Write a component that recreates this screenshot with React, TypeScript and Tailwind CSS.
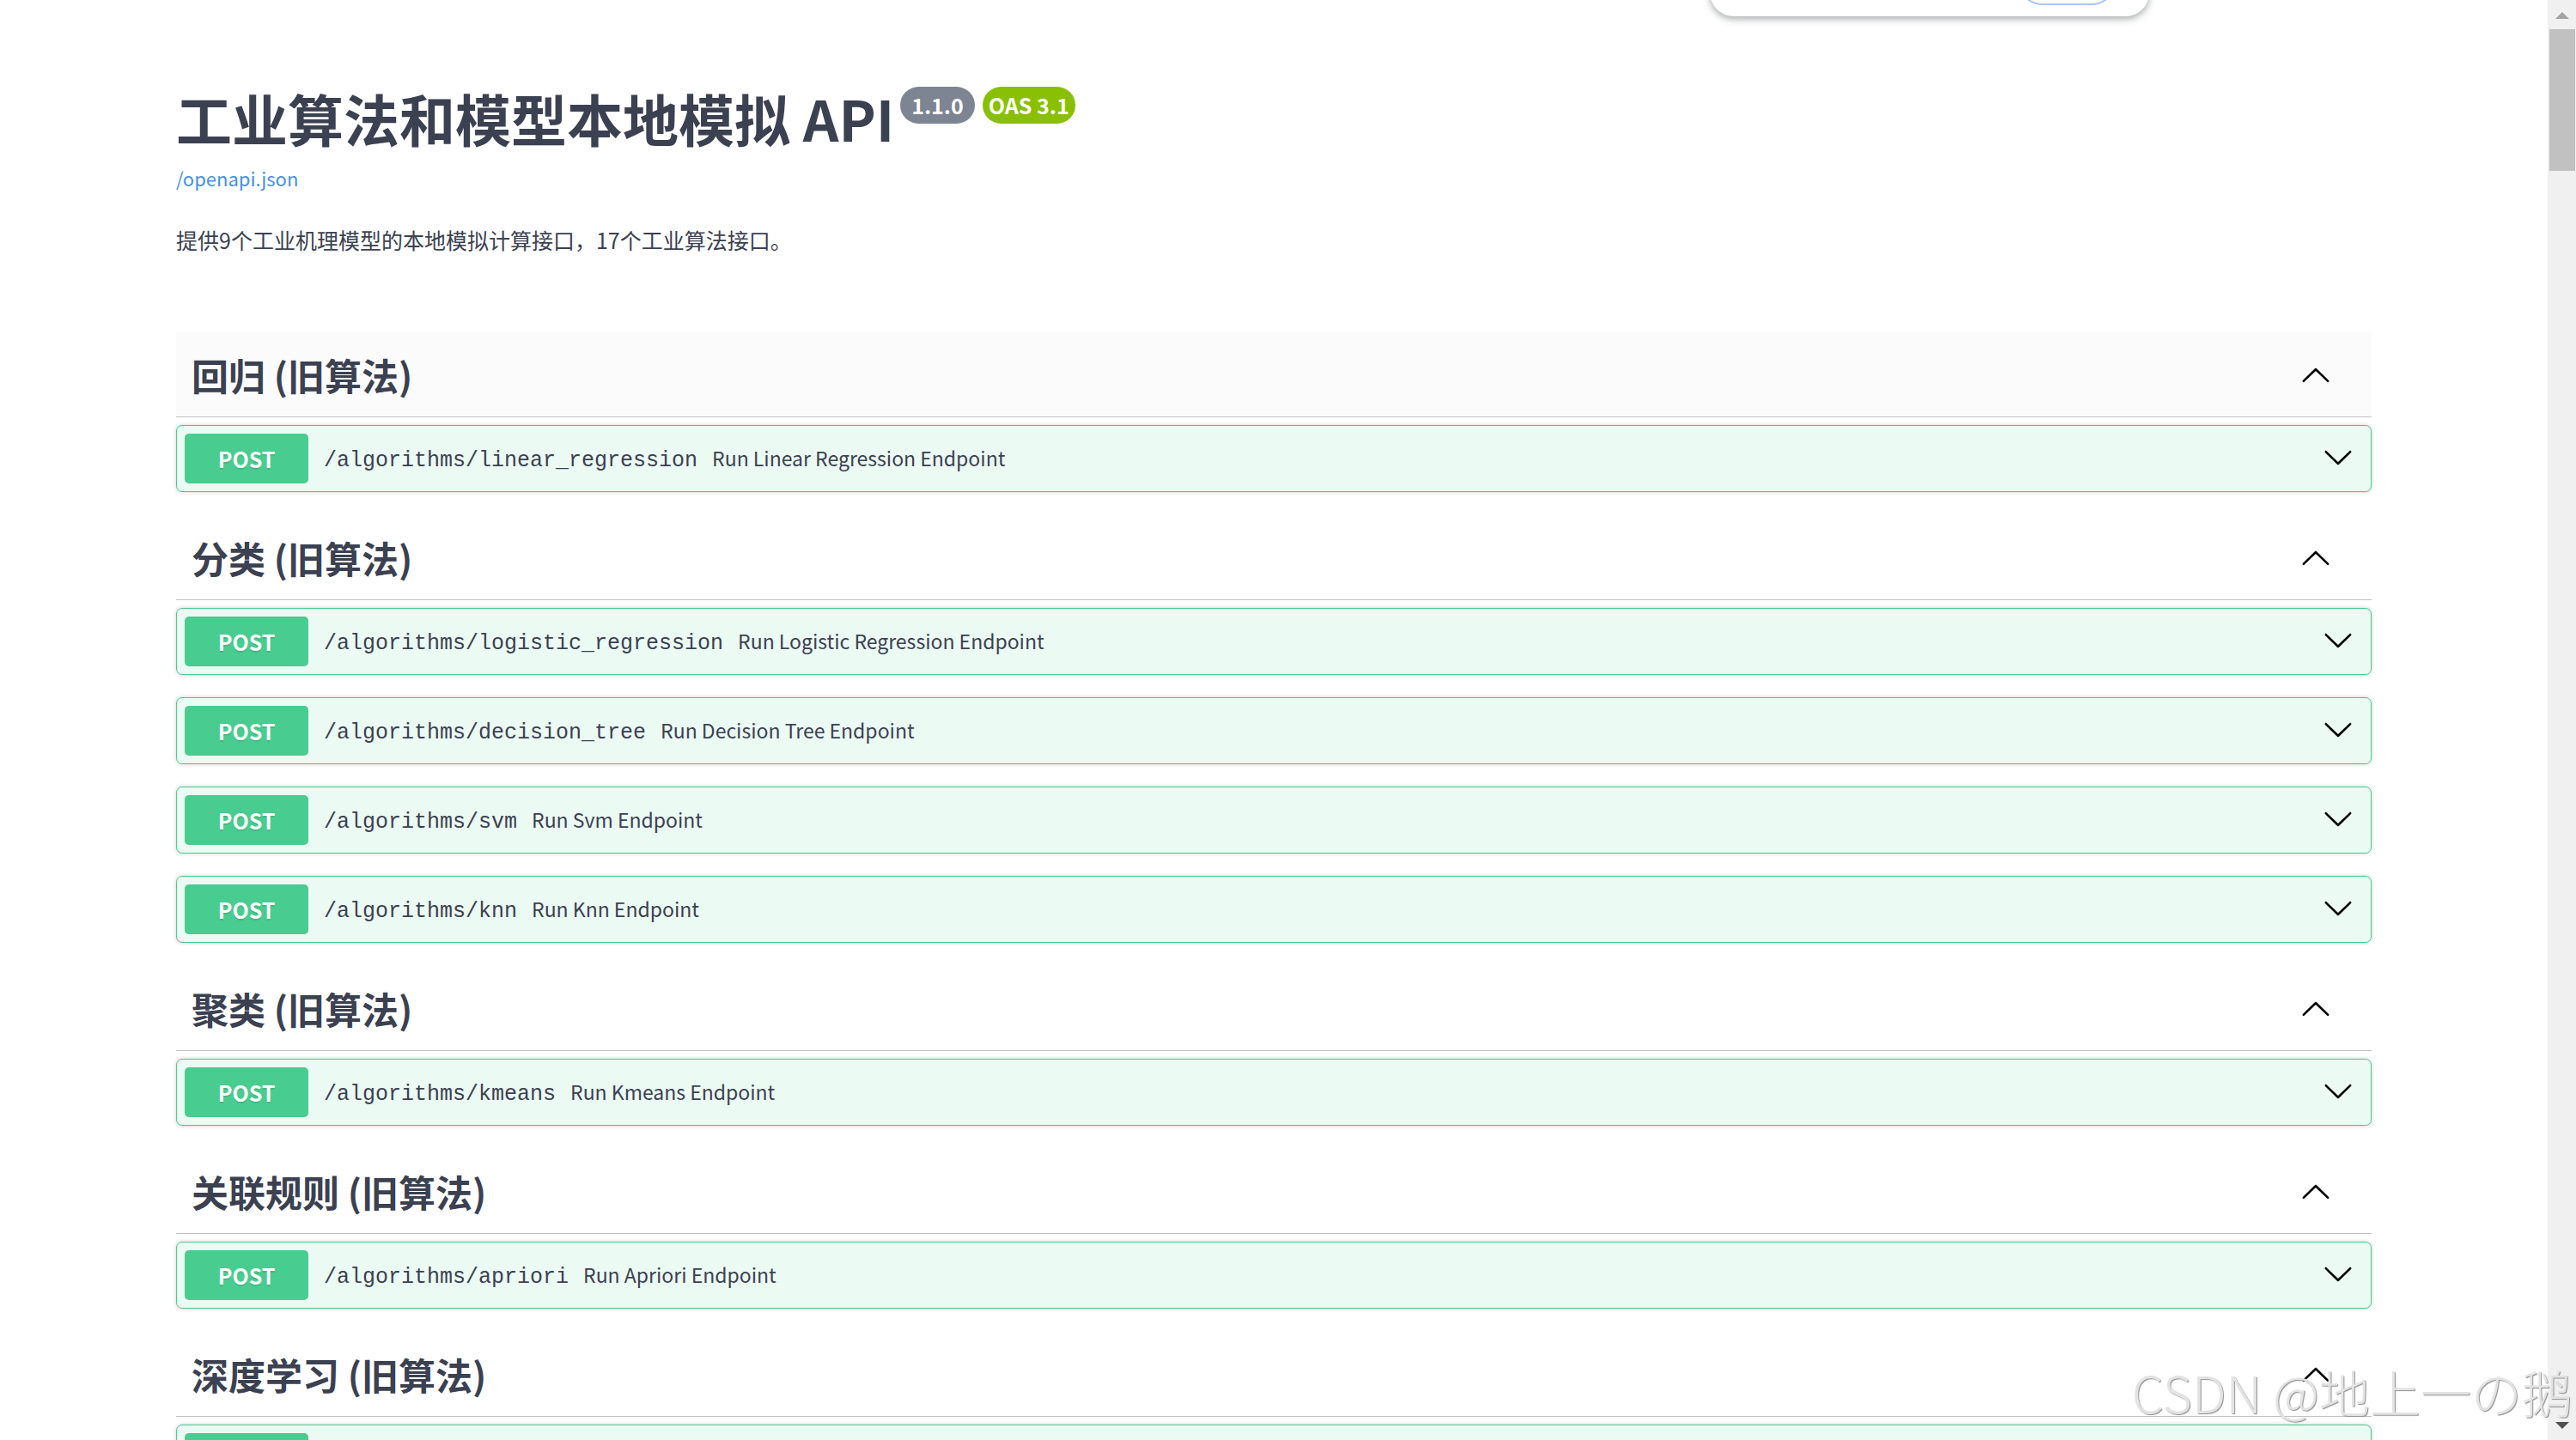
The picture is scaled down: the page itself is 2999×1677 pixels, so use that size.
type Operation = {
  method: string;
  path: string;
  summary: string;
};

type Tag = {
  name: string;
  hovered?: boolean;
  operations: Operation[];
};

const tags: Tag[] = [
  {
    name: "回归 (旧算法)",
    hovered: true,
    operations: [
      { method: "POST", path: "/algorithms/linear_regression", summary: "Run Linear Regression Endpoint" },
    ],
  },
  {
    name: "分类 (旧算法)",
    operations: [
      { method: "POST", path: "/algorithms/logistic_regression", summary: "Run Logistic Regression Endpoint" },
      { method: "POST", path: "/algorithms/decision_tree", summary: "Run Decision Tree Endpoint" },
      { method: "POST", path: "/algorithms/svm", summary: "Run Svm Endpoint" },
      { method: "POST", path: "/algorithms/knn", summary: "Run Knn Endpoint" },
    ],
  },
  {
    name: "聚类 (旧算法)",
    operations: [{ method: "POST", path: "/algorithms/kmeans", summary: "Run Kmeans Endpoint" }],
  },
  {
    name: "关联规则 (旧算法)",
    operations: [{ method: "POST", path: "/algorithms/apriori", summary: "Run Apriori Endpoint" }],
  },
  {
    name: "深度学习 (旧算法)",
    operations: [{ method: "", path: "", summary: "" }],
  },
];

function ArrowUp() {
  return (
    <svg className="size-9 shrink-0" viewBox="0 0 20 20" fill="black" aria-hidden="true">
      <path d="M17.418 14.908c.272.268.709.268.979 0s.271-.701 0-.969l-7.908-7.83c-.27-.268-.707-.268-.979 0l-7.908 7.83c-.27.268-.27.701 0 .969.271.268.709.268.979 0L10 7.767l7.418 7.141z" />
    </svg>
  );
}

function ArrowDown() {
  return (
    <svg className="size-9 shrink-0" viewBox="0 0 20 20" fill="black" aria-hidden="true">
      <path d="M17.418 5.091c.272-.268.709-.268.979 0s.271.701 0 .969l-7.908 7.83c-.27.268-.707.268-.979 0L1.602 6.06c-.27-.268-.27-.701 0-.969.271-.268.709-.268.979 0L10 12.232l7.418-7.141z" />
    </svg>
  );
}

function OperationRow({ method, path, summary }: Operation) {
  return (
    <button
      type="button"
      className="flex h-[78px] w-full items-center rounded-[7px] border border-[#49cc90] bg-[#ebfaf3] pl-[9px] pr-5 text-left shadow-[0_0_5px_rgba(0,0,0,0.19)]"
    >
      <span className="flex h-[58px] w-36 items-center justify-center rounded-[5px] bg-[#49cc90] pt-px text-[25px] font-bold text-white [text-shadow:0_2px_0_rgba(0,0,0,0.1)]">
        {method}
      </span>
      <span className="ml-[18px] flex flex-1 items-baseline gap-[17px] pt-1">
        <span className="font-['Liberation_Mono',monospace] text-[25px]">{path}</span>
        <span className="text-[23px]">{summary}</span>
      </span>
      <ArrowDown />
    </button>
  );
}

function TagSection({ name, hovered, operations }: Tag) {
  return (
    <section>
      <h3 className={hovered ? "bg-[#fbfbfb]" : "bg-white"}>
        <button
          type="button"
          className="flex h-[99px] w-full items-center justify-between border-b border-[#c0c1c5] pl-[18px] pr-[47px] text-left text-[43px] leading-[60px] font-bold"
        >
          {name}
          <ArrowUp />
        </button>
      </h3>
      <div className="mt-[9px] flex flex-col gap-[26px]">
        {operations.map((op) => (
          <OperationRow key={op.path} {...op} />
        ))}
      </div>
    </section>
  );
}

function Scrollbar() {
  return (
    <div className="flex w-[33px] shrink-0 flex-col items-center bg-[#f0f0f0]" aria-hidden="true">
      <svg className="h-[34px] w-4" viewBox="0 0 16 34" fill="#a3a3a3">
        <path d="M0 22 8 14l8 8z" />
      </svg>
      <div className="h-[165px] w-[30px] bg-[#c1c1c1]" />
      <svg className="mt-auto h-[34px] w-4" viewBox="0 0 16 34" fill="#505050">
        <path d="M0 13h16l-8 8z" />
      </svg>
    </div>
  );
}

export default function App() {
  return (
    <div className="relative flex h-screen overflow-hidden bg-white font-['Noto_Sans_CJK_SC',sans-serif] text-[#3b4151]">
      <main className="min-w-0 flex-1">
        <div className="mx-auto max-w-[2628px] px-9">
          <header className="pt-[86px] pb-[90px]">
            <div className="flex items-start">
              <h2 className="text-[65px] leading-[102px] font-bold">工业算法和模型本地模拟 API</h2>
              <div className="mt-[15px] ml-[7px] flex gap-[9px] text-[25px] leading-[43px] font-bold text-white">
                <span className="rounded-full bg-[#7d8492] px-[13px]">1.1.0</span>
                <span className="rounded-full bg-[#89bf04] px-[7px]">OAS 3.1</span>
              </div>
            </div>
            <a href="/openapi.json" className="block w-fit text-[22px] leading-[38px] text-[#4990e2]">
              /openapi.json
            </a>
            <p className="mt-[35px] text-[25px] leading-9">
              提供9个工业机理模型的本地模拟计算接口，17个工业算法接口。
            </p>
          </header>
          <div className="flex flex-col gap-[27px]">
            {tags.map((tag) => (
              <TagSection key={tag.name} {...tag} />
            ))}
          </div>
        </div>
      </main>
      <Scrollbar />

      {/* browser bubble hanging over the top edge */}
      <div className="absolute -top-20 right-[497px] h-[99px] w-[511px] rounded-[27px] bg-white shadow-[0_3px_8px_rgba(60,64,67,0.45)]">
        <div className="absolute right-[38px] bottom-[13px] h-[58px] w-[115px] rounded-full border-2 border-[#a8c7fa]" />
      </div>

      <div className="pointer-events-none absolute right-1 bottom-3 text-[59px] leading-[88px] font-light whitespace-nowrap text-[#e3e3e3] [text-shadow:1px_1px_1px_#8f8f8f]">
        CSDN @地上一の鹅
      </div>
    </div>
  );
}
